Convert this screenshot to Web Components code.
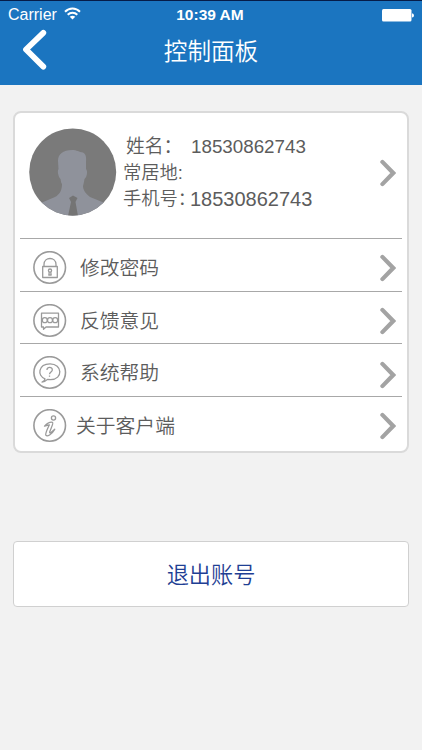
<!DOCTYPE html>
<html lang="zh-CN">
<head>
<meta charset="utf-8">
<title>控制面板</title>
<style>
  body {
    margin: 0;
    min-height: 750px;
    background-color: #f2f2f2;
    color: #5c5c5c;
    font-family: "Liberation Sans", "Noto Sans CJK SC", sans-serif;
    font-weight: 350;
  }
</style>
</head>
<body>
<control-panel></control-panel>
<script>
class StatusBar extends HTMLElement {
  constructor() {
    super();
    this.attachShadow({ mode: "open" });
    this.shadowRoot.innerHTML = `
      <style>
        :host {
          display: grid;
          grid-template-columns: 1fr auto 1fr;
          align-items: center;
          height: 28px;
          padding: 0 8px;
          color: #fff;
          font-size: 16px;
          line-height: 28px;
        }
        .carrier { display: flex; align-items: center; gap: 7px; }
        .carrier svg { margin-bottom: 3px; }
        .time { font-size: 15.5px; font-weight: bold; margin-right: 2px; }
        .battery { justify-self: end; }
        svg { display: block; }
      </style>
      <div class="carrier">
        <span>Carrier</span>
        <svg width="17" height="13" viewBox="0 0 17 13" fill="none" stroke="#fff" stroke-width="2">
          <path d="M1 4.8C5.2 .5 11.8 .5 16 4.8"/>
          <path d="M3.7 7.8C6.4 5.1 10.6 5.1 13.3 7.8"/>
          <path d="M8.5 12.6L5.7 9.8Q8.5 7.6 11.3 9.8Z" fill="#fff" stroke="none"/>
        </svg>
      </div>
      <span class="time">10:39 AM</span>
      <svg class="battery" width="32" height="13" viewBox="0 0 32 13" fill="#fff">
        <rect x="0" y="0" width="29.5" height="12.5" rx="1.5"/>
        <path d="M30 4.2q2 .3 2 2.2t-2 2.2z"/>
      </svg>
    `;
  }
}
customElements.define("status-bar", StatusBar);

class NavHeader extends HTMLElement {
  constructor() {
    super();
    this.attachShadow({ mode: "open" });
    this.shadowRoot.innerHTML = `
      <style>
        :host {
          display: block;
          box-sizing: border-box;
          height: 85px;
          border-top: 1px solid #061c48;
          background-color: #1b75c0;
        }
        .bar {
          display: grid;
          grid-template-columns: 60px 1fr 60px;
          height: 46px;
          color: #fff;
        }
        svg { display: block; margin: 0 0 0 21px; }
        h1 {
          margin: 0;
          text-align: center;
          font-size: 23.6px;
          font-weight: 350;
          line-height: 46px;
        }
      </style>
      <status-bar></status-bar>
      <div class="bar">
        <svg width="28" height="44" viewBox="0 0 28 44" fill="none" stroke="#fff" stroke-width="5.8" stroke-linecap="round" stroke-linejoin="round">
          <path d="M22.3 3.8L5 20.5L22.3 37.6"/>
        </svg>
        <h1><slot></slot></h1>
      </div>
    `;
  }
}
customElements.define("nav-header", NavHeader);

class ArrowRight extends HTMLElement {
  constructor() {
    super();
    this.attachShadow({ mode: "open" });
    this.shadowRoot.innerHTML = `
      <style>
        :host { display: block; width: 16px; height: 28px; }
        svg { display: block; }
      </style>
      <svg width="16" height="28" viewBox="0 0 16 28" fill="none" stroke="#a3a3a3" stroke-width="4.2" stroke-linecap="round">
        <path d="M2.4 2.9L13.2 14L2.4 25.1"/>
      </svg>
    `;
  }
}
customElements.define("arrow-right", ArrowRight);

class UserProfile extends HTMLElement {
  constructor() {
    super();
    this.attachShadow({ mode: "open" });
    this.shadowRoot.innerHTML = `
      <style>
        :host {
          display: flex;
          box-sizing: border-box;
          height: 125px;
          padding: 15px 11px 0 14px;
        }
        .avatar { display: block; flex: none; }
        .info { flex: 1; margin: 6px 0 0 6px; }
        .line {
          display: flex;
          height: 26.2px;
          line-height: 26px;
          font-size: 18.3px;
          white-space: nowrap;
        }
        .line span { flex: none; width: 67px; }
        .name { padding-left: 3px; font-size: 18.8px; }
        .name span { width: 65px; }
        .phone b { font-size: 20px; }
        b { font-weight: normal; }
        arrow-right { margin-top: 31px; }
      </style>
      <svg class="avatar" width="88" height="88" viewBox="0 0 88 88">
        <defs><clipPath id="round"><circle cx="43.7" cy="44" r="43.5"/></clipPath></defs>
        <circle cx="43.7" cy="44" r="43.5" fill="#7a7a7a"/>
        <g clip-path="url(#round)">
          <path fill="#8f929b" d="M33 56C32 55 32 53 31.5 51C29.5 49 28 43 29.5 41L29 33C29 26 34 22 43 22C48 22 50 24 54 24.5C57 26 57.5 30 57 34V41C59 43 58 49 55.5 51C55 54 54.5 56 54 58C54 62 57 66 61 69L88 80V88H0V80L26 69C30 67 33 63 33 56Z"/>
          <path fill="#747474" d="M40 70L44 67.5L48.5 70L46.5 74L49 88H39L42 74Z"/>
        </g>
      </svg>
      <div class="info">
        <div class="line name"><span>姓名：</span><b>18530862743</b></div>
        <div class="line"><span>常居地:</span></div>
        <div class="line phone"><span>手机号：</span><b>18530862743</b></div>
      </div>
      <arrow-right></arrow-right>
    `;
  }
}
customElements.define("user-profile", UserProfile);

const ICONS = {
  lock: `
    <rect x="9.7" y="15.5" width="14.6" height="11"/>
    <path d="M11 15.5V13.5C11 5.5 23 5.5 23 13.5V15.5"/>
    <path d="M16.3 21.2L15.8 24H18.2L17.7 21.2"/>
    <circle cx="17" cy="19.6" r="1.6"/>`,
  feedback: `
    <path d="M8.5 9.2H25.5V23H13L10.5 25.3V23H8.5Z"/>
    <circle cx="11.8" cy="16.2" r="2.5"/>
    <circle cx="17" cy="16.2" r="2.5"/>
    <circle cx="22.2" cy="16.2" r="2.5"/>`,
  help: `
    <path d="M12 22.8C4 20 5 8 17 7.8C29.5 7.7 30.5 23.5 17.5 23.7L14.5 23.4Q12 26 9 26Q12 24.7 12 22.8Z"/>
    <path d="M14 14C13.8 10.5 19.5 10.7 19.3 14C19.2 16 16.7 16 16.5 18.2M16.5 19.6V20.8"/>`,
  info: `
    <circle cx="20.5" cy="9" r="2.1"/>
    <path d="M11.5 17.2C14.5 14 17 12.8 19.5 13.3C20.7 13.700 18.200 19 16.700 23C16.200 25 18.500 23.300 21.700 20.300C18.500 25.700 14.300 28 12.800 26.200C12 24.500 14.700 19.500 16.300 15.900C15 15.700 13.300 17.200 11.500 17.200Z"/>`
};

class MenuItem extends HTMLElement {
  constructor() {
    super();
    this.attachShadow({ mode: "open" });
    this.shadowRoot.innerHTML = `
      <style>
        :host {
          display: flex;
          align-items: center;
          box-sizing: border-box;
          height: 52.7px;
          margin: 0 5px;
          padding: 6.4px 6px 0 13px;
          border-top: 1px solid #a8a8a8;
          font-size: 19.8px;
          line-height: 32px;
        }
        svg { display: block; flex: none; }
        .label { flex: 1; margin-left: var(--label-gap, 13px); }
        arrow-right { margin-top: var(--arrow-shift, 0); }
      </style>
      <svg width="34" height="34" viewBox="0 0 34 34" fill="none" stroke="#9a9a9a" stroke-width="1.3" stroke-linejoin="round">
        <circle cx="16.7" cy="16.5" r="15.8" stroke-width="1.6"/>
        ${ICONS[this.getAttribute("icon")] || ""}
      </svg>
      <div class="label"><slot></slot></div>
      <arrow-right></arrow-right>
    `;
  }
}
customElements.define("menu-item", MenuItem);

class PanelCard extends HTMLElement {
  constructor() {
    super();
    this.attachShadow({ mode: "open" });
    this.shadowRoot.innerHTML = `
      <style>
        :host {
          display: block;
          box-sizing: border-box;
          height: 342px;
          margin: 26px 13px 0;
          border: 2px solid #dadada;
          border-radius: 8px;
          background-color: #fff;
        }
      </style>
      <slot></slot>
    `;
  }
}
customElements.define("panel-card", PanelCard);

class LogoutButton extends HTMLElement {
  constructor() {
    super();
    this.attachShadow({ mode: "open" });
    this.shadowRoot.innerHTML = `
      <style>
        :host { display: block; margin: 88px 13px 0; }
        button {
          display: block;
          width: 100%;
          height: 66px;
          padding: 0 0 2px;
          border: 1px solid #d0d0d0;
          border-radius: 4px;
          background-color: #fff;
          color: #1f3f94;
          font: inherit;
          font-size: 22.2px;
          cursor: pointer;
        }
      </style>
      <button type="button"><slot></slot></button>
    `;
  }
}
customElements.define("logout-button", LogoutButton);

class ControlPanel extends HTMLElement {
  constructor() {
    super();
    this.attachShadow({ mode: "open" });
    this.shadowRoot.innerHTML = `
      <style>
        :host { display: flow-root; }
        .help { --arrow-shift: 3px; }
        .about { --label-gap: 9px; }
      </style>
      <nav-header>控制面板</nav-header>
      <panel-card>
        <user-profile></user-profile>
        <menu-item icon="lock">修改密码</menu-item>
        <menu-item icon="feedback">反馈意见</menu-item>
        <menu-item class="help" icon="help">系统帮助</menu-item>
        <menu-item class="about" icon="info">关于客户端</menu-item>
      </panel-card>
      <logout-button>退出账号</logout-button>
    `;
  }
}
customElements.define("control-panel", ControlPanel);
</script>
</body>
</html>
